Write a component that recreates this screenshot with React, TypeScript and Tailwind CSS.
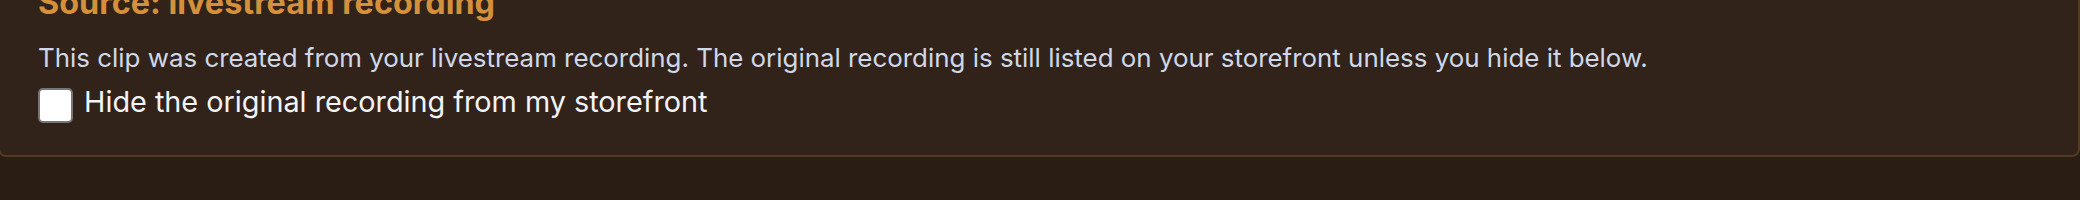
import { useState } from 'react';

export default function App() {
  const [hidden, setHidden] = useState(false);

  return (
    <div className="h-[200px] w-full overflow-hidden bg-[#2a1d14] font-['Inter',sans-serif]">
      <div className="-ml-[2px] -mt-[17px] rounded-lg border-2 border-[#543a1e] bg-[#32231a] pb-[32px] pl-[38px]">
        <h3 className="text-[32.4px] font-bold leading-[36px] text-[#d4903a]">
          Source: livestream recording
        </h3>
        <p className="mt-[19px] text-[25.9px] leading-[36px] text-[#cfd8e8]">
          This clip was created from your livestream recording. The original recording is still listed on your
          storefront unless you hide it below.
        </p>
        <label className="mt-[12px] flex cursor-pointer items-start gap-[11px]">
          <input
            type="checkbox"
            checked={hidden}
            onChange={(e) => setHidden(e.target.checked)}
            className="h-[35px] w-[35px] shrink-0 cursor-pointer appearance-none rounded-[5px] border-2 border-[#767676] bg-white checked:bg-[#d4903a]"
          />
          <span className="text-[28.8px] leading-[28px] text-[#f2f4f8]">
            Hide the original recording from my storefront
          </span>
        </label>
      </div>
    </div>
  );
}
